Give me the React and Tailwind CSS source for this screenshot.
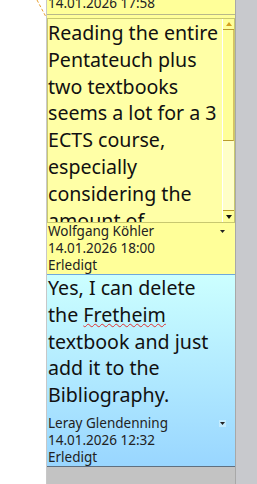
import React from "react";

const font = { fontFamily: '"Noto Sans", "Open Sans", sans-serif' };

function Drop({ blue }) {
  return (
    <div className={`w-[7px] h-[7px] flex items-center justify-center ${blue ? "bg-[#c4ecff]" : ""}`}>
      <svg width="5" height="3" viewBox="0 0 5 3"><path d="M0 0H5L2.5 3Z" fill="#222" /></svg>
    </div>
  );
}

export default function App() {
  return (
    <div className="w-[257px] h-[484px] flex bg-white overflow-hidden" style={font}>
      <div className="w-[46px] h-full relative bg-white">
        <svg className="absolute left-0 top-0" width="46" height="20">
          <line x1="37" y1="0" x2="46" y2="17" stroke="#e8a030" strokeWidth="1" strokeDasharray="3 2" />
        </svg>
      </div>
      <div className="w-px h-full bg-[#c8c8c8]" />
      <div className="w-[188px] h-full flex flex-col bg-[#c3c3c3]">
        <div className="h-[14px] bg-[#ffff99] relative overflow-hidden">
          <div className="absolute left-[1px] top-[-5px] text-[13.5px] leading-[17px] text-[#222] whitespace-nowrap">14.01.2026 17:58</div>
        </div>
        <div className="h-px bg-[#b8b88a]" />
        <div className="bg-[#ffff99] flex flex-col">
          <div className="h-[3px]" />
          <div className="h-[205px] flex border border-[#c8c870] bg-[#ffffa6]">
            <div className="flex-1 overflow-hidden pt-[1px] text-[19.6px] leading-[26.8px] text-[#111]">
              Reading the entire Pentateuch plus two textbooks seems a lot for a 3 ECTS course, especially considering the amount of readings
            </div>
            <div className="w-[12px] flex flex-col bg-[#ffffc8] border-l border-[#fff]">
              <div className="h-[11px] flex items-center justify-center bg-[#ffff99] border-b border-[#b89b2e]">
                <svg width="6" height="4" viewBox="0 0 6 4"><path d="M0 4H6L3 0Z" fill="#d4a020" /></svg>
              </div>
              <div className="h-[111px] bg-[#ffff99] border-b border-[#b89b2e] border-r border-r-[#d8c060]" />
              <div className="flex-1" />
              <div className="h-[12px] flex items-center justify-center bg-[#ffff99] border-t border-[#b89b2e]">
                <svg width="6" height="4" viewBox="0 0 6 4"><path d="M0 0H6L3 4Z" fill="#111" /></svg>
              </div>
            </div>
          </div>
          <div className="flex flex-col text-[13.5px] leading-[17px] text-[#222] pl-[1px]">
            <div className="flex items-center justify-between pr-[9px]">
              <span>Wolfgang Köhler</span>
              <Drop />
            </div>
            <span>14.01.2026 18:00</span>
            <span>Erledigt</span>
          </div>
        </div>
        <div className="h-px bg-[#6fa8dc]" />
        <div className="h-[191px] flex flex-col justify-between bg-gradient-to-b from-[#ccffff] to-[#99d6ff]">
          <div className="pl-[1px] pr-[14px] text-[19.6px] leading-[26.8px] text-[#111]">
            Yes, I can delete the <span className="underline decoration-wavy decoration-[#e03030] decoration-1">Fretheim</span> textbook and just add it to the Bibliography.
          </div>
          <div className="flex flex-col text-[13.5px] leading-[17px] text-[#222] pl-[1px]">
            <div className="flex items-center justify-between pr-[9px]">
              <span>Leray Glendenning</span>
              <Drop blue />
            </div>
            <span>14.01.2026 12:32</span>
            <span>Erledigt</span>
          </div>
        </div>
        <div className="h-px bg-[#607080]" />
        <div className="flex-1 bg-[#c3c3c3]" />
      </div>
      <div className="w-px h-full bg-[#a8a8a8]" />
      <div className="flex-1 h-full bg-[#c8c9cd]" />
    </div>
  );
}
